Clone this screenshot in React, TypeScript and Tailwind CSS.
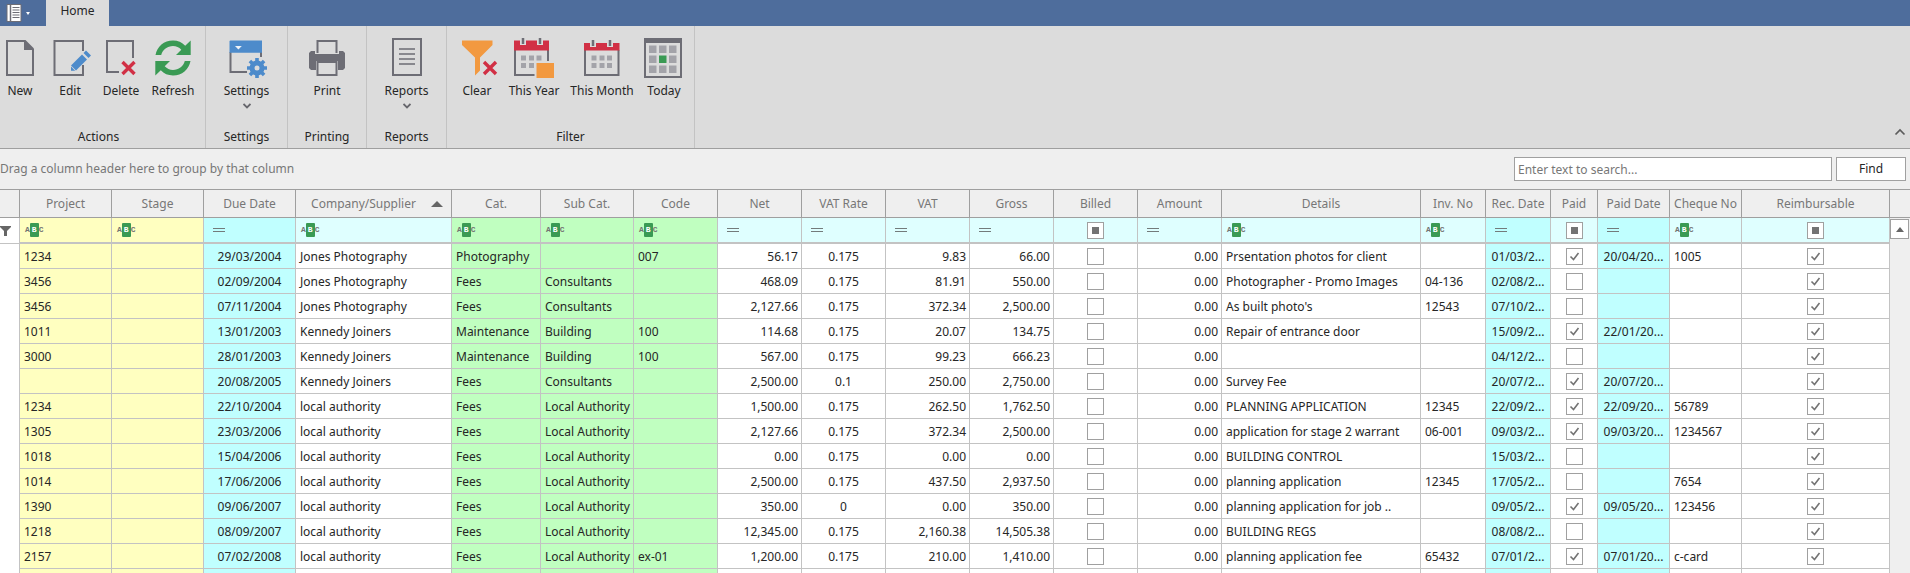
import { useState } from 'react';
import type { ReactNode } from 'react';

type Kind = 'text' | 'date' | 'num' | 'rate' | 'check';

type Column = {
  title: string;
  kind: Kind;
  width: string;
  bg: string;
  filterBg: string;
  sorted?: boolean;
};

const YELLOW = 'bg-[#ffffc0]';
const CYAN = 'bg-[#c0ffff]';
const GREEN = 'bg-[#c0ffc0]';
const PALE = 'bg-[#dfffff]';

const columns: Column[] = [
  { title: 'Project', kind: 'text', width: 'w-[92px]', bg: YELLOW, filterBg: YELLOW },
  { title: 'Stage', kind: 'text', width: 'w-[92px]', bg: YELLOW, filterBg: YELLOW },
  { title: 'Due Date', kind: 'date', width: 'w-[92px]', bg: CYAN, filterBg: CYAN },
  { title: 'Company/Supplier', kind: 'text', width: 'w-[156px]', bg: 'bg-white', filterBg: PALE, sorted: true },
  { title: 'Cat.', kind: 'text', width: 'w-[89px]', bg: GREEN, filterBg: GREEN },
  { title: 'Sub Cat.', kind: 'text', width: 'w-[93px]', bg: GREEN, filterBg: GREEN },
  { title: 'Code', kind: 'text', width: 'w-[84px]', bg: GREEN, filterBg: GREEN },
  { title: 'Net', kind: 'num', width: 'w-[84px]', bg: 'bg-white', filterBg: PALE },
  { title: 'VAT Rate', kind: 'rate', width: 'w-[84px]', bg: 'bg-white', filterBg: PALE },
  { title: 'VAT', kind: 'num', width: 'w-[84px]', bg: 'bg-white', filterBg: PALE },
  { title: 'Gross', kind: 'num', width: 'w-[84px]', bg: 'bg-white', filterBg: PALE },
  { title: 'Billed', kind: 'check', width: 'w-[84px]', bg: 'bg-white', filterBg: PALE },
  { title: 'Amount', kind: 'num', width: 'w-[84px]', bg: 'bg-white', filterBg: PALE },
  { title: 'Details', kind: 'text', width: 'w-[199px]', bg: 'bg-white', filterBg: PALE },
  { title: 'Inv. No', kind: 'text', width: 'w-[65px]', bg: 'bg-white', filterBg: PALE },
  { title: 'Rec. Date', kind: 'date', width: 'w-[65px]', bg: CYAN, filterBg: CYAN },
  { title: 'Paid', kind: 'check', width: 'w-[47px]', bg: 'bg-white', filterBg: PALE },
  { title: 'Paid Date', kind: 'date', width: 'w-[72px]', bg: CYAN, filterBg: CYAN },
  { title: 'Cheque No', kind: 'text', width: 'w-[72px]', bg: 'bg-white', filterBg: PALE },
  { title: 'Reimbursable', kind: 'check', width: 'w-auto', bg: 'bg-white', filterBg: PALE },
];

const rows: (string | boolean)[][] = [
  ['1234', '', '29/03/2004', 'Jones Photography', 'Photography', '', '007', '56.17', '0.175', '9.83', '66.00', false, '0.00', 'Prsentation photos for client', '', '01/03/2...', true, '20/04/20...', '1005', true],
  ['3456', '', '02/09/2004', 'Jones Photography', 'Fees', 'Consultants', '', '468.09', '0.175', '81.91', '550.00', false, '0.00', 'Photographer - Promo Images', '04-136', '02/08/2...', false, '', '', true],
  ['3456', '', '07/11/2004', 'Jones Photography', 'Fees', 'Consultants', '', '2,127.66', '0.175', '372.34', '2,500.00', false, '0.00', "As built photo's", '12543', '07/10/2...', false, '', '', true],
  ['1011', '', '13/01/2003', 'Kennedy Joiners', 'Maintenance', 'Building', '100', '114.68', '0.175', '20.07', '134.75', false, '0.00', 'Repair of entrance door', '', '15/09/2...', true, '22/01/20...', '', true],
  ['3000', '', '28/01/2003', 'Kennedy Joiners', 'Maintenance', 'Building', '100', '567.00', '0.175', '99.23', '666.23', false, '0.00', '', '', '04/12/2...', false, '', '', true],
  ['', '', '20/08/2005', 'Kennedy Joiners', 'Fees', 'Consultants', '', '2,500.00', '0.1', '250.00', '2,750.00', false, '0.00', 'Survey Fee', '', '20/07/2...', true, '20/07/20...', '', true],
  ['1234', '', '22/10/2004', 'local authority', 'Fees', 'Local Authority', '', '1,500.00', '0.175', '262.50', '1,762.50', false, '0.00', 'PLANNING APPLICATION', '12345', '22/09/2...', true, '22/09/20...', '56789', true],
  ['1305', '', '23/03/2006', 'local authority', 'Fees', 'Local Authority', '', '2,127.66', '0.175', '372.34', '2,500.00', false, '0.00', 'application for stage 2 warrant', '06-001', '09/03/2...', true, '09/03/20...', '1234567', true],
  ['1018', '', '15/04/2006', 'local authority', 'Fees', 'Local Authority', '', '0.00', '0.175', '0.00', '0.00', false, '0.00', 'BUILDING CONTROL', '', '15/03/2...', false, '', '', true],
  ['1014', '', '17/06/2006', 'local authority', 'Fees', 'Local Authority', '', '2,500.00', '0.175', '437.50', '2,937.50', false, '0.00', 'planning application', '12345', '17/05/2...', false, '', '7654', true],
  ['1390', '', '09/06/2007', 'local authority', 'Fees', 'Local Authority', '', '350.00', '0', '0.00', '350.00', false, '0.00', 'planning application for job ..', '', '09/05/2...', true, '09/05/20...', '123456', true],
  ['1218', '', '08/09/2007', 'local authority', 'Fees', 'Local Authority', '', '12,345.00', '0.175', '2,160.38', '14,505.38', false, '0.00', 'BUILDING REGS', '', '08/08/2...', false, '', '', true],
  ['2157', '', '07/02/2008', 'local authority', 'Fees', 'Local Authority', 'ex-01', '1,200.00', '0.175', '210.00', '1,410.00', false, '0.00', 'planning application fee', '65432', '07/01/2...', true, '07/01/20...', 'c-card', true],
  ['', '', '', '', '', '', '', '', '', '', '', false, '', '', '', '', false, '', '', true],
];

const GREY = '#6d6d75';
const BLUE = '#4d8bcb';
const RED = '#d13045';
const ORANGE = '#f29940';
const LEAF = '#3a9a54';

function Icon({ children }: { children: ReactNode }) {
  return (
    <svg width="40" height="40" viewBox="0 0 40 40" fill="none" className="overflow-visible" aria-hidden="true">
      {children}
    </svg>
  );
}

const NewIcon = (
  <Icon>
    <path d="M24.5 3H7v34h26V11" stroke={GREY} strokeWidth="2" />
    <path d="M24 2h1.500L34 10.500V12H24z" fill={GREY} />
  </Icon>
);

const EditIcon = (
  <Icon>
    <path d="M33 13V3H4.500v34H33V27" stroke={GREY} strokeWidth="2" />
    <path d="M21 27.500l11-11 5 5-11 11z" fill={BLUE} />
    <path d="M33.500 15l2.500-2.500 5 5L38.500 20z" fill={BLUE} />
    <path d="M21 28.500l4.200 4.200-4.200.1z" fill={BLUE} />
  </Icon>
);

const DeleteIcon = (
  <Icon>
    <path d="M32 20V3H6v31h12" stroke={GREY} strokeWidth="2" />
    <path d="M21.500 24l12 12M33.500 24l-12 12" stroke={RED} strokeWidth="3.400" />
  </Icon>
);

const RefreshIcon = (
  <Icon>
    <path d="M2.500 17C4 8.500 11 2.500 20 2.500c5 0 9 1.800 12.200 5.200L37.700 2.500V17H23l5.300-5.300C26 9.300 23.300 8 20 8c-5.600 0-10.300 3.600-11.800 9z" fill={LEAF} />
    <path d="M37.500 23C36 31.500 29 37.500 20 37.500c-5 0-9-1.800-12.200-5.200L2.300 37.500V23H17l-5.300 5.300C14 30.700 16.700 32 20 32c5.600 0 10.300-3.600 11.800-9z" fill={LEAF} />
  </Icon>
);

const SettingsIcon = (
  <Icon>
    <path d="M34 14v5M3.500 14v20H20" stroke={GREY} strokeWidth="2" />
    <path d="M2.500 3.500a1 1 0 0 1 1-1H35v12.300H2.500z" fill={BLUE} />
    <path d="M8 8h6.800l-3.400 3.400z" fill="#eef3f8" />
    <circle cx="30" cy="30" r="5" stroke={BLUE} strokeWidth="5" />
    <path d="M30 20v4M30 36v4M20 30h4M36 30h4M22.900 22.900l3 3M34.100 34.100l3 3M22.900 37.100l3-3M34.100 25.900l3-3" stroke={BLUE} strokeWidth="3.600" />
  </Icon>
);

const PrintIcon = (
  <Icon>
    <path d="M10.500 15V3h19v12" stroke={GREY} strokeWidth="2" />
    <path d="M4 13h4v3h24v-3h4l2 2v15l-2 2h-5V23H9v9H4l-2-2V15z" fill={GREY} />
    <path d="M10.500 24h19v13h-19z" stroke={GREY} strokeWidth="2" />
  </Icon>
);

const ReportsIcon = (
  <Icon>
    <path d="M6 1h28v36H6z" stroke={GREY} strokeWidth="2" />
    <path d="M12 11h16M12 16h16M12 21h16M12 26h16" stroke="#88888e" strokeWidth="2" />
  </Icon>
);

const ClearIcon = (
  <Icon>
    <path d="M5 2.500h30.500V7L23 19.500v13l-5 5v-18L5 7z" fill={ORANGE} />
    <path d="M27 24l12 12M39 24L27 36" stroke={RED} strokeWidth="3.400" />
  </Icon>
);

const YearIcon = (
  <Icon>
    <path d="M34 12v11M1 12v25h19.500" stroke={GREY} strokeWidth="2" />
    <path d="M0 2.500h6V7h6V2.500h11V7h6V2.500h6v10H0z" fill={RED} />
    <path d="M9 0v6M26 0v6" stroke={GREY} strokeWidth="2.500" />
    <path d="M7 17.500h5v5H7zM15 17.500h5v5h-5zM22.500 17.500h5v5h-5zM7 25h5v5H7zM15 25h5v5h-5z" fill="#a3a3a9" />
    <path d="M22.500 25h17.500v15H22.500z" fill={ORANGE} />
  </Icon>
);

const MonthIcon = (
  <Icon>
    <path d="M3 12v25h33.500V12" stroke={GREY} strokeWidth="2" />
    <path d="M2 5h6v4h6V5h11v4h6V5h6.500v7.500H2z" fill={RED} />
    <path d="M11 2v6M28 2v6" stroke={GREY} strokeWidth="2.500" />
    <path d="M9.500 17.500h5v5h-5zM17.500 17.500h5v5h-5zM25 17.500h5v5h-5zM9.500 25h5v5h-5zM17.500 25h5v5h-5zM25 25h5v5h-5z" fill="#a3a3a9" />
  </Icon>
);

const TodayIcon = (
  <Icon>
    <path d="M1 4v35h36V4" stroke={GREY} strokeWidth="2" />
    <path d="M0 0h38v5H0z" fill={GREY} />
    <path d="M5 7.500h7.500V15H5zM15 7.500h7.500V15H15zM25 7.500h7.500V15H25zM5 17.500h7.500V25H5zM25 17.500h7.500V25H25zM5 27.500h7.500V35H5zM15 27.500h7.500V35H15zM25 27.500h7.500V35H25z" fill="#a3a3a9" />
    <path d="M15 17.500h7.500V25H15z" fill={LEAF} />
  </Icon>
);

const groups = [
  {
    title: 'Actions',
    width: 'w-[206px]',
    titlePad: 'pr-2',
    items: [
      { label: 'New', icon: NewIcon, width: 'w-[40px]' },
      { label: 'Edit', icon: EditIcon, width: 'w-[60px]' },
      { label: 'Delete', icon: DeleteIcon, width: 'w-[42px]' },
      { label: 'Refresh', icon: RefreshIcon, width: 'w-[62px]' },
    ],
  },
  { title: 'Settings', width: 'w-[82px]', items: [{ label: 'Settings', icon: SettingsIcon, width: 'w-full', menu: true }] },
  { title: 'Printing', width: 'w-[79px]', items: [{ label: 'Print', icon: PrintIcon, width: 'w-full' }] },
  { title: 'Reports', width: 'w-[80px]', items: [{ label: 'Reports', icon: ReportsIcon, width: 'w-full', menu: true }] },
  {
    title: 'Filter',
    width: 'w-[248px]',
    items: [
      { label: 'Clear', icon: ClearIcon, width: 'w-[60px]' },
      { label: 'This Year', icon: YearIcon, width: 'w-[54px]' },
      { label: 'This Month', icon: MonthIcon, width: 'w-[82px]' },
      { label: 'Today', icon: TodayIcon, width: 'w-[42px]' },
    ],
  },
];

function RibbonButton({ label, icon, width, menu }: { label: string; icon: ReactNode; width: string; menu?: boolean }) {
  return (
    <button type="button" className={`flex h-[88px] shrink-0 flex-col items-center whitespace-nowrap pt-3 ${width}`}>
      {icon}
      <span className="mt-[5px] leading-4">{label}</span>
      {menu && (
        <svg width="8" height="6" viewBox="0 0 8 6" fill="none" className="mt-1" aria-hidden="true">
          <path d="M.5 1L4 4.500 7.500 1" stroke="#66666c" strokeWidth="1.800" />
        </svg>
      )}
    </button>
  );
}

function CheckBox({ label, value, mixed }: { label: string; value: boolean; mixed?: boolean }) {
  const [checked, setChecked] = useState(value);
  return (
    <label className="relative mx-auto block h-[17px] w-[17px]">
      <input
        type="checkbox"
        aria-label={label}
        checked={checked}
        onChange={(e) => setChecked(e.target.checked)}
        className="block h-[17px] w-[17px] appearance-none border border-[#a0a0a0] bg-white"
      />
      {mixed && <span className="pointer-events-none absolute inset-[5px] bg-[#737373]" />}
      {checked && !mixed && (
        <svg width="17" height="17" viewBox="0 0 17 17" fill="none" className="pointer-events-none absolute inset-0" aria-hidden="true">
          <path d="M4.500 8.500l3 3 5-6.500" stroke="#737373" strokeWidth="1.600" />
        </svg>
      )}
    </label>
  );
}

function FilterCell({ col }: { col: Column }) {
  if (col.kind === 'check') return <CheckBox label={`Filter ${col.title}`} value={false} mixed />;
  if (col.kind === 'text') {
    return (
      <span className="ml-[5px] flex items-center font-['Liberation_Mono'] text-[8px] leading-[14px] font-bold text-[#737373]">
        A<span className="rounded-[1px] bg-[#3a9a54] px-[2px] text-white">B</span>C
      </span>
    );
  }
  return (
    <svg width="12" height="5" viewBox="0 0 12 5" className="ml-[9px]" aria-hidden="true">
      <path d="M0 .5h12M0 3.500h12" stroke="#737b7b" />
    </svg>
  );
}

const align: Record<Kind, string> = {
  text: 'pt-0.5 text-left pl-1',
  date: 'pt-0.5 text-center',
  num: 'pt-0.5 text-right pr-[3px]',
  rate: 'pt-0.5 text-center',
  check: 'text-center',
};

export default function App() {
  return (
    <div className="flex h-screen flex-col overflow-hidden bg-white font-['Noto_Sans','DejaVu_Sans',sans-serif] text-[12px] leading-4 text-[#262626]">
      <header className="flex h-[26px] shrink-0 bg-[#4e6d9c]">
        <button type="button" aria-label="Application menu" className="flex w-[46px] items-center gap-1 pl-[6px]">
          <svg width="16" height="18" viewBox="0 0 16 18" fill="none" aria-hidden="true">
            <path d="M1 .5h14v17H1z" fill="#fff" stroke="#6d6d75" />
            <path d="M4.500 1v16" stroke="#6d6d75" strokeWidth="1.500" />
            <path d="M6.500 3.500h7M6.500 6h7M6.500 8.500h7M6.500 11h7M6.500 13.500h7" stroke="#6d6d75" />
          </svg>
          <svg width="4" height="3" viewBox="0 0 4 3" aria-hidden="true">
            <path d="M0 0h4L2 3z" fill="#fff" />
          </svg>
        </button>
        <button type="button" className="w-[63px] bg-[#dcdcdc] pb-1">Home</button>
      </header>

      <section className="flex h-[123px] shrink-0 border-b border-[#9f9f9f] bg-[#dcdcdc]">
        {groups.map((g) => (
          <div key={g.title} className={`flex shrink-0 flex-col justify-between border-r border-[#c3c3c3] pb-[3px] ${g.width}`}>
            <div className="flex">
              {g.items.map((item) => (
                <RibbonButton key={item.label} {...item} />
              ))}
            </div>
            <div className={`text-center ${g.titlePad ?? ''}`}>{g.title}</div>
          </div>
        ))}
        <button type="button" aria-label="Collapse ribbon" className="mt-auto mr-1 mb-3 ml-auto">
          <svg width="12" height="8" viewBox="0 0 12 8" fill="none" aria-hidden="true">
            <path d="M1.500 6.500L6 2l4.500 4.500" stroke="#5c5c5c" strokeWidth="1.700" />
          </svg>
        </button>
      </section>

      <section className="flex h-[40px] shrink-0 items-center bg-[#efefef] text-[#777777]">
        <span>Drag a column header here to group by that column</span>
        <input
          type="text"
          aria-label="Search"
          placeholder="Enter text to search..."
          className="ml-auto h-6 w-[318px] border border-[#a0a0a0] bg-white px-[3px] placeholder:text-[#777777]"
        />
        <button type="button" className="mr-1 ml-1 h-6 w-[70px] border border-[#a0a0a0] bg-white text-[#262626]">Find</button>
      </section>

      <div className="min-h-0 flex-1 overflow-hidden">
        <table className="w-full table-fixed border-separate border-spacing-0 whitespace-nowrap">
          <thead>
            <tr className="h-[29px] bg-[#efefef] text-[#777777]">
              <th className="w-[20px] border-y border-r border-[#9f9f9f] p-0" />
              {columns.map((col) => (
                <th key={col.title} className={`border-y border-r border-[#9f9f9f] p-0 font-normal ${col.width}`}>
                  {col.sorted ? (
                    <span className="flex items-center pr-2">
                      <span className="flex-1">{col.title}</span>
                      <svg width="12" height="6" viewBox="0 0 12 6" aria-label="Sorted ascending">
                        <path d="M6 0l6 6H0z" fill="#666666" />
                      </svg>
                    </span>
                  ) : (
                    col.title
                  )}
                </th>
              ))}
              <th className="w-[20px] border-y border-[#9f9f9f] p-0" />
            </tr>
          </thead>
          <tbody>
            <tr className="h-[26px]">
              <td className="border-r border-b border-[#c3c3c3] p-0">
                <svg width="11" height="10" viewBox="0 0 11 10" aria-label="Filter row">
                  <path d="M0 0h11v1L7 5v5H4V5L0 1z" fill="#666666" />
                </svg>
              </td>
              {columns.map((col) => (
                <td key={col.title} className={`border-r border-b-2 border-[#c3c3c3] p-0 ${col.filterBg}`}>
                  <FilterCell col={col} />
                </td>
              ))}
              <td rowSpan={rows.length + 1} className="bg-[#efefef] p-0 pt-px align-top">
                <button type="button" aria-label="Scroll up" className="flex h-5 w-[19px] items-center justify-center border border-[#a0a0a0] bg-white">
                  <svg width="8" height="5" viewBox="0 0 8 5" aria-hidden="true">
                    <path d="M4 0l4 5H0z" fill="#666666" />
                  </svg>
                </button>
              </td>
            </tr>
            {rows.map((row, r) => (
              <tr key={r} className="h-[25px]">
                <td className="border-r border-[#c3c3c3] p-0" />
                {columns.map((col, c) => (
                  <td key={col.title} className={`border-r border-b border-[#c3c3c3] ${align[col.kind]} ${col.bg}`}>
                    {col.kind === 'check' ? <CheckBox label={`${col.title}, row ${r + 1}`} value={row[c] as boolean} /> : row[c]}
                  </td>
                ))}
              </tr>
            ))}
          </tbody>
        </table>
      </div>
    </div>
  );
}
